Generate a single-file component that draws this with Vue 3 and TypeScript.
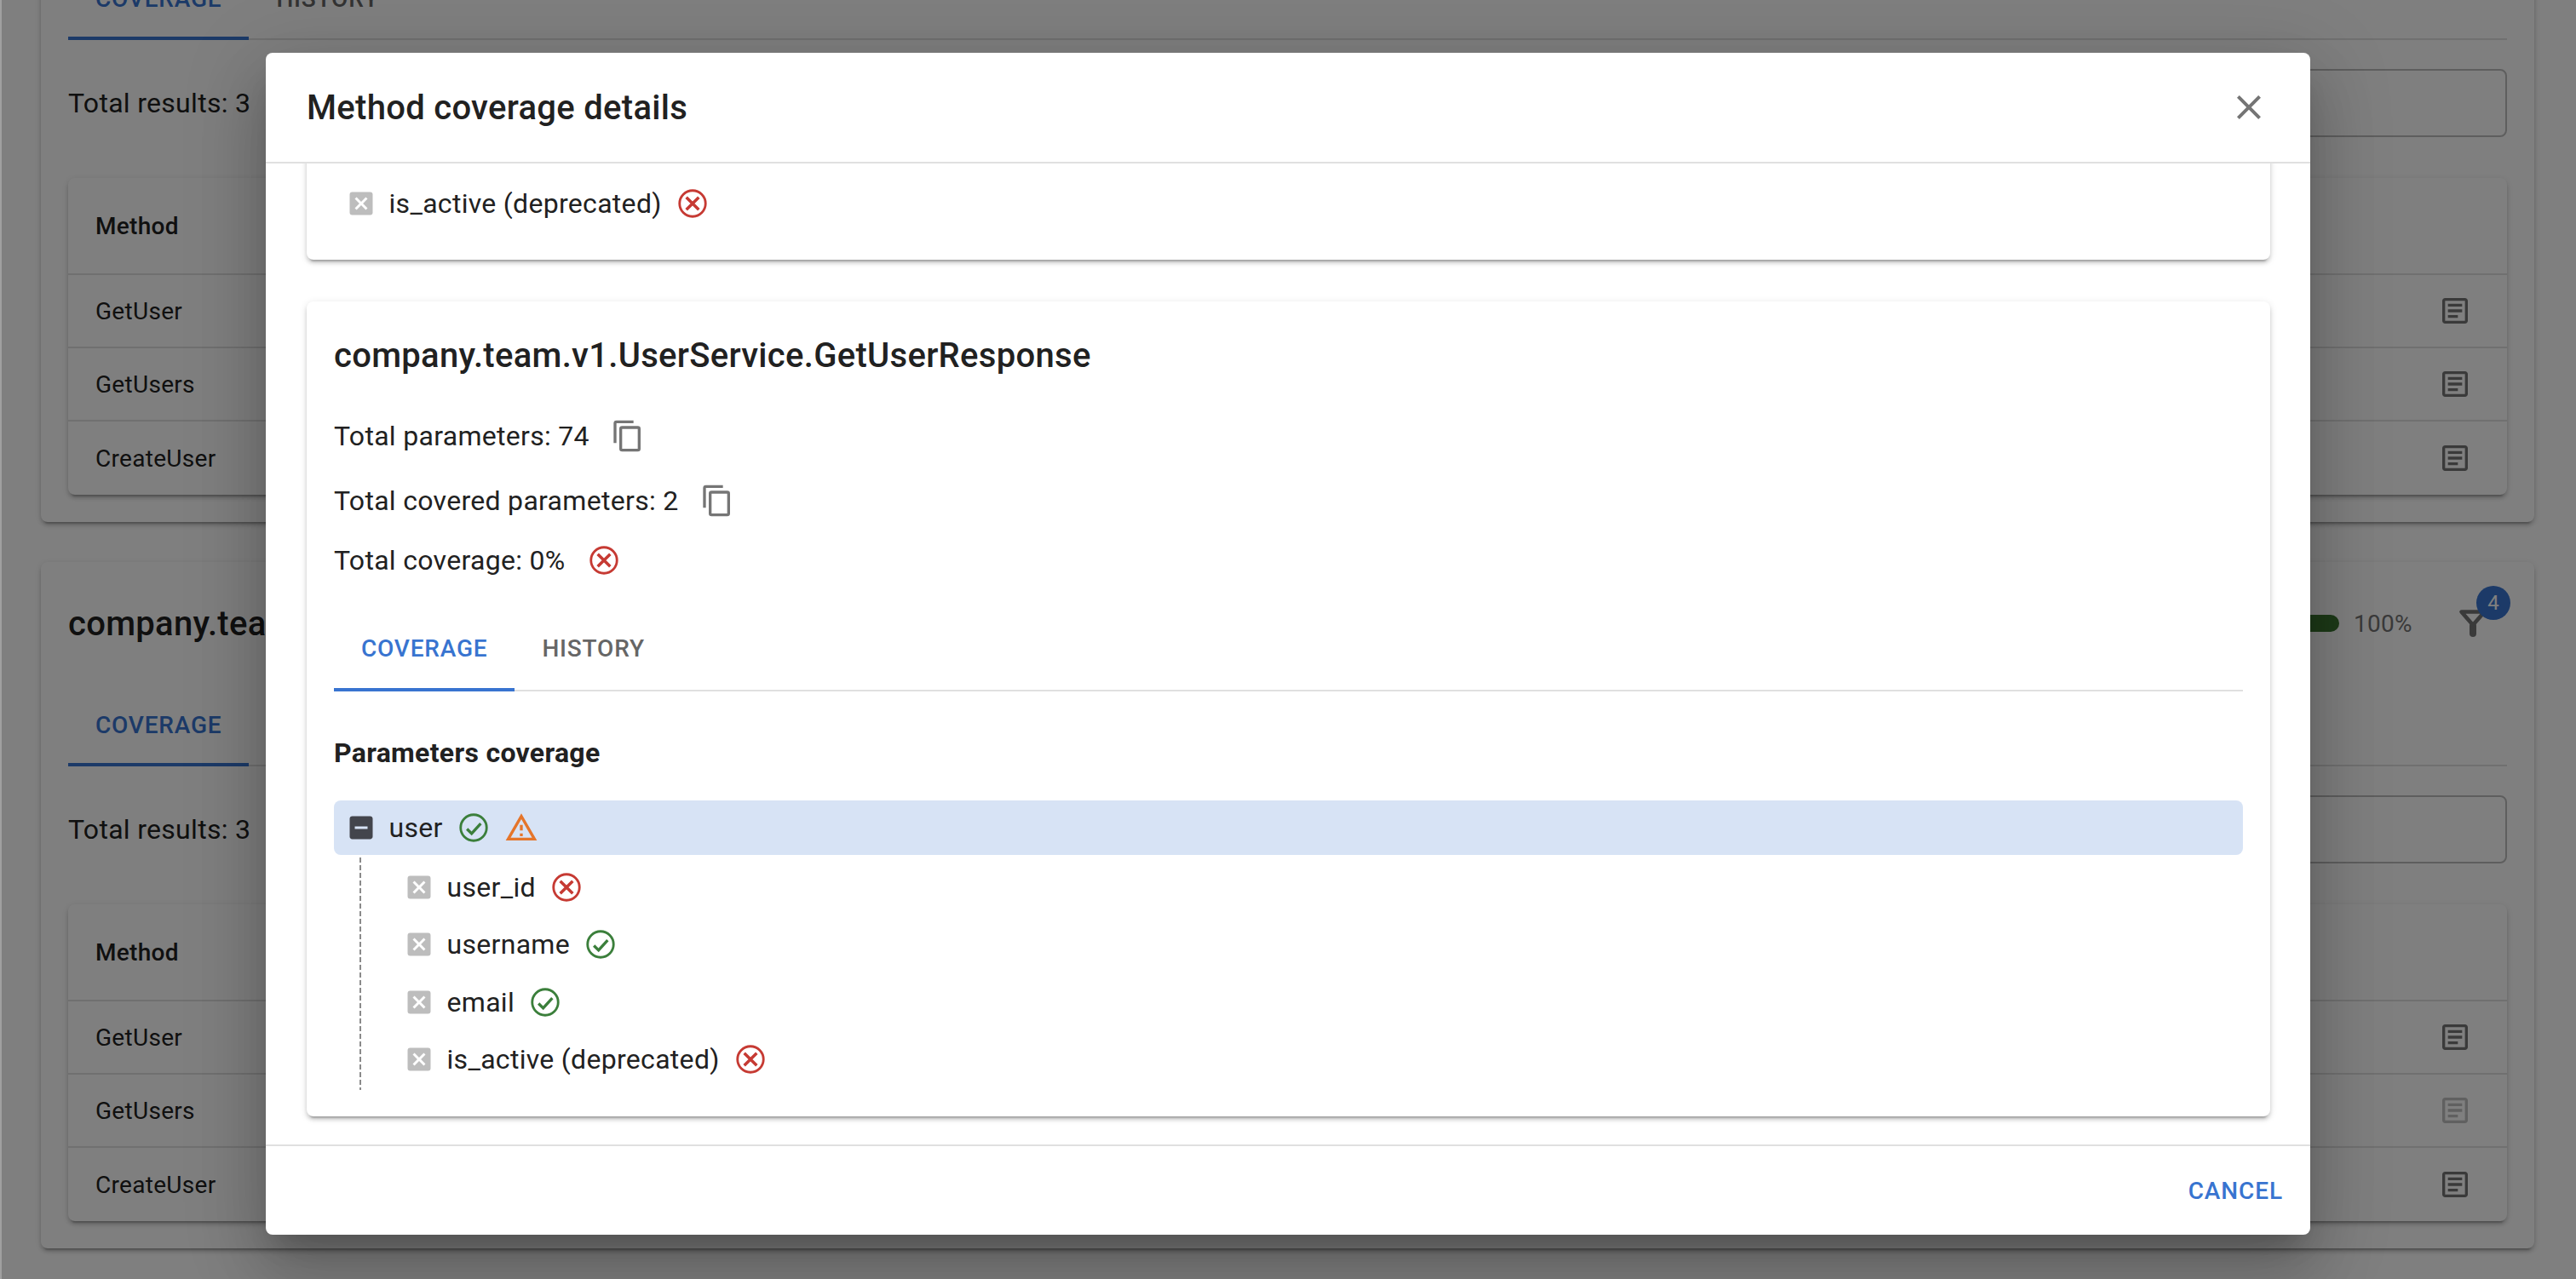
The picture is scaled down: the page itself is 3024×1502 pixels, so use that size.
<script setup lang="ts">
const mdi = {
  close: 'M19,6.41L17.59,5L12,10.59L6.41,5L5,6.41L10.59,12L5,17.59L6.41,19L12,13.41L17.59,19L19,17.59L13.41,12L19,6.41Z',
  copy: 'M19,21H8V7H19M19,5H8A2,2 0 0,0 6,7V21A2,2 0 0,0 8,23H19A2,2 0 0,0 21,21V7A2,2 0 0,0 19,5M16,1H4A2,2 0 0,0 2,3V17H4V3H16V1Z',
  warn: 'M12,2L1,21H23M12,6L19.53,19H4.47M11,10V14H13V10M11,16V18H13V16',
  closeBox: 'M19,3H16.3H7.7H5A2,2 0 0,0 3,5V7.7V16.4V19A2,2 0 0,0 5,21H7.7H16.3H19A2,2 0 0,0 21,19V16.4V7.7V5A2,2 0 0,0 19,3M15.6,17L12,13.4L8.4,17L7,15.6L10.6,12L7,8.4L8.4,7L12,10.6L15.6,7L17,8.4L13.4,12L17,15.6L15.6,17Z',
  minusBox: 'M19,3H5C3.89,3 3,3.89 3,5V19C3,20.11 3.89,21 5,21H19C20.11,21 21,20.11 21,19V5C21,3.89 20.11,3 19,3M17,13H7V11H17V13Z',
  doc: 'M5,3C3.89,3 3,3.89 3,5V19C3,20.11 3.89,21 5,21H19C20.11,21 21,20.11 21,19V5C21,3.89 20.11,3 19,3H5M5,5H19V19H5V5M7,7V9H17V7H7M7,11V13H17V11H7M7,15V17H14V15H7Z',
}

type Row = { name: string; disabled?: boolean }
const sections: { rows: Row[] }[] = [
  { rows: [{ name: 'GetUser' }, { name: 'GetUsers' }, { name: 'CreateUser' }] },
  { rows: [{ name: 'GetUser' }, { name: 'GetUsers', disabled: true }, { name: 'CreateUser' }] },
]
const params = [
  { name: 'user_id', ok: false },
  { name: 'username', ok: true },
  { name: 'email', ok: true },
  { name: 'is_active (deprecated)', ok: false },
]
</script>

<template>
  <div class="screen">
    <svg class="defs" aria-hidden="true">
      <symbol id="st-ok" viewBox="0 0 24 24">
        <circle cx="12" cy="12" r="9.15" fill="none" stroke="#3b7f3b" stroke-width="1.7" />
        <path d="M7.3 12.9L10.6 16.1L17 9.1" fill="none" stroke="#3b7f3b" stroke-width="2" />
      </symbol>
      <symbol id="st-fail" viewBox="0 0 24 24">
        <circle cx="12" cy="12" r="9.15" fill="none" stroke="#c63a33" stroke-width="1.7" />
        <path d="M7.6 7.6L16.4 16.4M16.4 7.6L7.6 16.4" fill="none" stroke="#c63a33" stroke-width="2.1" />
      </symbol>
    </svg>

    <main class="page">
      <section v-for="(s, i) in sections" :key="i" class="panel">
        <header class="panel-head">
          <h2 class="panel-title">company.team.v1.UserService</h2>
          <div class="bar"></div>
          <span class="pct">100%</span>
          <div class="filter">
            <svg class="funnel" width="40" height="40" viewBox="0 0 40 40">
              <path d="M6.5 6.5H33.5L20 22Z" fill="none" stroke="#757575" stroke-width="4.6" stroke-linejoin="round" />
              <path d="M20 23V32" fill="none" stroke="#757575" stroke-width="8" stroke-linecap="round" />
            </svg>
            <span class="badge">4</span>
          </div>
        </header>
        <nav class="tabs panel-tabs">
          <span class="tab active">COVERAGE</span>
          <span class="tab">HISTORY</span>
        </nav>
        <div class="toolbar">
          <span class="total">Total results: 3</span>
          <div class="search"></div>
        </div>
        <div class="table">
          <div class="thead">Method</div>
          <div v-for="r in s.rows" :key="r.name" class="trow">
            <span>{{ r.name }}</span>
            <svg class="i40" :class="{ dim: r.disabled }" viewBox="0 0 24 24"><path :d="mdi.doc" fill="#757575" /></svg>
          </div>
        </div>
      </section>
    </main>

    <div class="scrim">
      <div class="dialog">
        <header class="dialog-head">
          <h1 class="dialog-title">Method coverage details</h1>
          <svg class="i48" viewBox="0 0 24 24"><path :d="mdi.close" fill="#757575" /></svg>
        </header>

        <div class="dialog-body">
          <div class="card card-tail">
            <div class="leaf">
              <svg class="i36" viewBox="0 0 24 24"><path :d="mdi.closeBox" fill="#bdbdbd" /></svg>
              <span class="leaf-text">is_active (deprecated)</span>
              <svg class="i40 status"><use href="#st-fail" /></svg>
            </div>
          </div>

          <div class="card">
            <h2 class="card-title">company.team.v1.UserService.GetUserResponse</h2>
            <div class="stat first">
              <span>Total parameters: 74</span>
              <svg class="i40 stat-icon" viewBox="0 0 24 24"><path :d="mdi.copy" fill="#757575" /></svg>
            </div>
            <div class="stat">
              <span>Total covered parameters: 2</span>
              <svg class="i40 stat-icon" viewBox="0 0 24 24"><path :d="mdi.copy" fill="#757575" /></svg>
            </div>
            <div class="stat last">
              <span>Total coverage: 0%</span>
              <svg class="i40 stat-icon"><use href="#st-fail" /></svg>
            </div>

            <nav class="tabs card-tabs">
              <span class="tab active">COVERAGE</span>
              <span class="tab">HISTORY</span>
            </nav>

            <h3 class="tree-title">Parameters coverage</h3>

            <div class="node">
              <svg class="i36" viewBox="0 0 24 24"><path :d="mdi.minusBox" fill="#43454c" /></svg>
              <span class="leaf-text">user</span>
              <svg class="i40 status"><use href="#st-ok" /></svg>
              <svg class="i40 status" viewBox="0 0 24 24"><path :d="mdi.warn" fill="#e5752a" /></svg>
            </div>
            <div class="children">
              <div class="guide"></div>
              <div class="leaves">
                <div v-for="p in params" :key="p.name" class="leaf child">
                  <svg class="i36" viewBox="0 0 24 24"><path :d="mdi.closeBox" fill="#bdbdbd" /></svg>
                  <span class="leaf-text">{{ p.name }}</span>
                  <svg class="i40 status"><use :href="p.ok ? '#st-ok' : '#st-fail'" /></svg>
                </div>
              </div>
            </div>
          </div>
        </div>

        <footer class="dialog-foot">
          <span class="cancel">CANCEL</span>
        </footer>
      </div>
    </div>
    <div class="edge"></div>
  </div>
</template>

<style>
html,
body {
  margin: 0;
  overflow: hidden;
  background: #fff;
}
</style>

<style scoped>
.screen {
  position: relative;
  width: 3024px;
  height: 1502px;
  overflow: hidden;
  font-family: Roboto, "Liberation Sans", sans-serif;
  color: #212121;
  background: #fff;
}
.defs {
  position: absolute;
  width: 0;
  height: 0;
}
.page {
  display: flex;
  flex-direction: column;
  gap: 47px;
  margin-top: -193px;
  padding: 0 49px 0 48px;
}
.panel {
  height: 806px;
  box-sizing: border-box;
  padding: 32px;
  border-radius: 8px;
  background: #fff;
  box-shadow: 0 6px 2px -4px rgba(0, 0, 0, 0.2), 0 4px 4px rgba(0, 0, 0, 0.14), 0 2px 10px rgba(0, 0, 0, 0.12);
}
.panel-head {
  display: flex;
  align-items: center;
  height: 80px;
  margin-bottom: 32px;
}
.panel-title,
.card-title,
.dialog-title {
  margin: 0;
  font-size: 40px;
  font-weight: 500;
  letter-spacing: 0.3px;
}
.panel-title {
  flex: 1;
}
.bar {
  width: 200px;
  height: 20px;
  border-radius: 10px;
  background: #3a7430;
}
.pct {
  margin-left: 17px;
  width: 67px;
  font-size: 28px;
  letter-spacing: 0.3px;
  color: #757575;
}
.filter {
  position: relative;
  display: flex;
  align-items: center;
  justify-content: center;
  width: 80px;
  height: 80px;
  margin-left: 33px;
}
.badge {
  position: absolute;
  left: 44px;
  top: -4px;
  width: 40px;
  height: 40px;
  border-radius: 50%;
  background: #3874d0;
  color: #fff;
  font-size: 24px;
  line-height: 40px;
  text-align: center;
}
.tabs {
  display: flex;
  height: 96px;
  box-sizing: border-box;
  border-bottom: 2px solid #e0e0e0;
}
.tab {
  display: flex;
  align-items: center;
  justify-content: center;
  box-sizing: border-box;
  height: 96px;
  padding: 0 32px;
  border-bottom: 4px solid transparent;
  font-size: 28px;
  font-weight: 500;
  letter-spacing: 0.8px;
  color: #666;
}
.tab.active {
  color: #3874d0;
  border-bottom-color: #3874d0;
}
.panel-tabs .tab {
  padding-top: 2px;
}
.card-tabs .tab {
  padding-bottom: 2px;
}
.toolbar {
  display: flex;
  align-items: center;
  justify-content: space-between;
  height: 80px;
  margin-top: 34px;
}
.total {
  font-size: 32px;
  letter-spacing: 0.3px;
}
.search {
  width: 1500px;
  height: 80px;
  box-sizing: border-box;
  border: 2px solid #bdbdbd;
  border-radius: 8px;
}
.table {
  margin-top: 48px;
  border-radius: 8px;
  background: #fff;
  box-shadow: 0 6px 2px -4px rgba(0, 0, 0, 0.2), 0 4px 4px rgba(0, 0, 0, 0.14), 0 2px 10px rgba(0, 0, 0, 0.12);
  font-size: 28px;
  letter-spacing: 0.3px;
}
.thead {
  display: flex;
  align-items: center;
  height: 114px;
  box-sizing: border-box;
  padding: 0 32px;
  font-weight: 500;
  border-bottom: 2px solid #e0e0e0;
}
.trow {
  display: flex;
  align-items: center;
  justify-content: space-between;
  height: 86px;
  box-sizing: border-box;
  padding: 0 41px 0 32px;
  border-bottom: 2px solid #e0e0e0;
}
.trow:last-child {
  border-bottom: 0;
}
.i36 {
  flex: none;
  width: 36px;
  height: 36px;
}
.i40 {
  flex: none;
  width: 40px;
  height: 40px;
}
.i48 {
  flex: none;
  width: 48px;
  height: 48px;
}
.dim {
  opacity: 0.45;
}
.scrim {
  position: absolute;
  inset: 0;
  display: flex;
  justify-content: center;
  align-items: flex-start;
  padding-top: 62px;
  background: rgba(0, 0, 0, 0.5);
}
.edge {
  position: absolute;
  left: 0;
  top: 0;
  bottom: 0;
  width: 2px;
  background: #a0a0a0;
}
.dialog {
  display: flex;
  flex-direction: column;
  width: 2400px;
  height: 1388px;
  border-radius: 8px;
  background: #fff;
  overflow: hidden;
  box-shadow: 0 22px 30px -14px rgba(0, 0, 0, 0.2), 0 48px 76px 6px rgba(0, 0, 0, 0.14), 0 18px 92px 16px rgba(0, 0, 0, 0.12);
}
.dialog-head {
  display: flex;
  flex: none;
  align-items: center;
  justify-content: space-between;
  box-sizing: border-box;
  height: 130px;
  padding: 0 48px;
  border-bottom: 2px solid #e0e0e0;
}
.dialog-body {
  display: flex;
  flex: 1;
  flex-direction: column;
  justify-content: flex-end;
  gap: 49px;
  min-height: 0;
  padding: 0 47px 33px 48px;
  overflow: hidden;
}
.dialog-foot {
  display: flex;
  flex: none;
  align-items: center;
  justify-content: flex-end;
  box-sizing: border-box;
  height: 106px;
  padding: 0 32px 0 0;
  border-top: 2px solid #e0e0e0;
}
.cancel {
  font-size: 28px;
  font-weight: 500;
  letter-spacing: 0.9px;
  color: #3874d0;
}
.card {
  flex: none;
  box-sizing: border-box;
  padding: 32px 32px 31px;
  border-radius: 8px;
  background: #fff;
  box-shadow: 0 6px 2px -4px rgba(0, 0, 0, 0.2), 0 4px 4px rgba(0, 0, 0, 0.14), 0 2px 10px rgba(0, 0, 0, 0.12);
}
.card-tail {
  padding-top: 40px;
  padding-bottom: 32px;
}
.card-title {
  line-height: 64px;
}
.stat {
  display: flex;
  align-items: center;
  height: 56px;
  margin-top: 20px;
  font-size: 32px;
  letter-spacing: 0.3px;
}
.stat.first {
  margin-top: 34px;
}
.stat.last {
  height: 44px;
}
.stat-icon {
  margin-left: 25px;
}
.card-tabs {
  margin-top: 36px;
}
.tree-title {
  margin: 48px 0 32px;
  font-size: 32px;
  font-weight: 700;
  line-height: 48px;
  letter-spacing: 0.3px;
}
.node,
.leaf {
  display: flex;
  align-items: center;
  padding-left: 14px;
  font-size: 32px;
  letter-spacing: 0.3px;
}
.node {
  height: 64px;
  border-radius: 8px;
  background: #d7e3f5;
}
.leaf {
  height: 67.5px;
}
.leaf.child {
  padding-left: 0;
}
.leaf-text {
  margin-left: 14.5px;
}
.status {
  margin-left: 16px;
}
.children {
  display: flex;
  margin-top: 3px;
}
.guide {
  flex: none;
  width: 2px;
  margin-left: 30px;
  background: repeating-linear-gradient(to bottom, #8a8a8a 0 6px, transparent 6px 9px);
}
.leaves {
  padding: 1px 0 2px 50px;
}
</style>
